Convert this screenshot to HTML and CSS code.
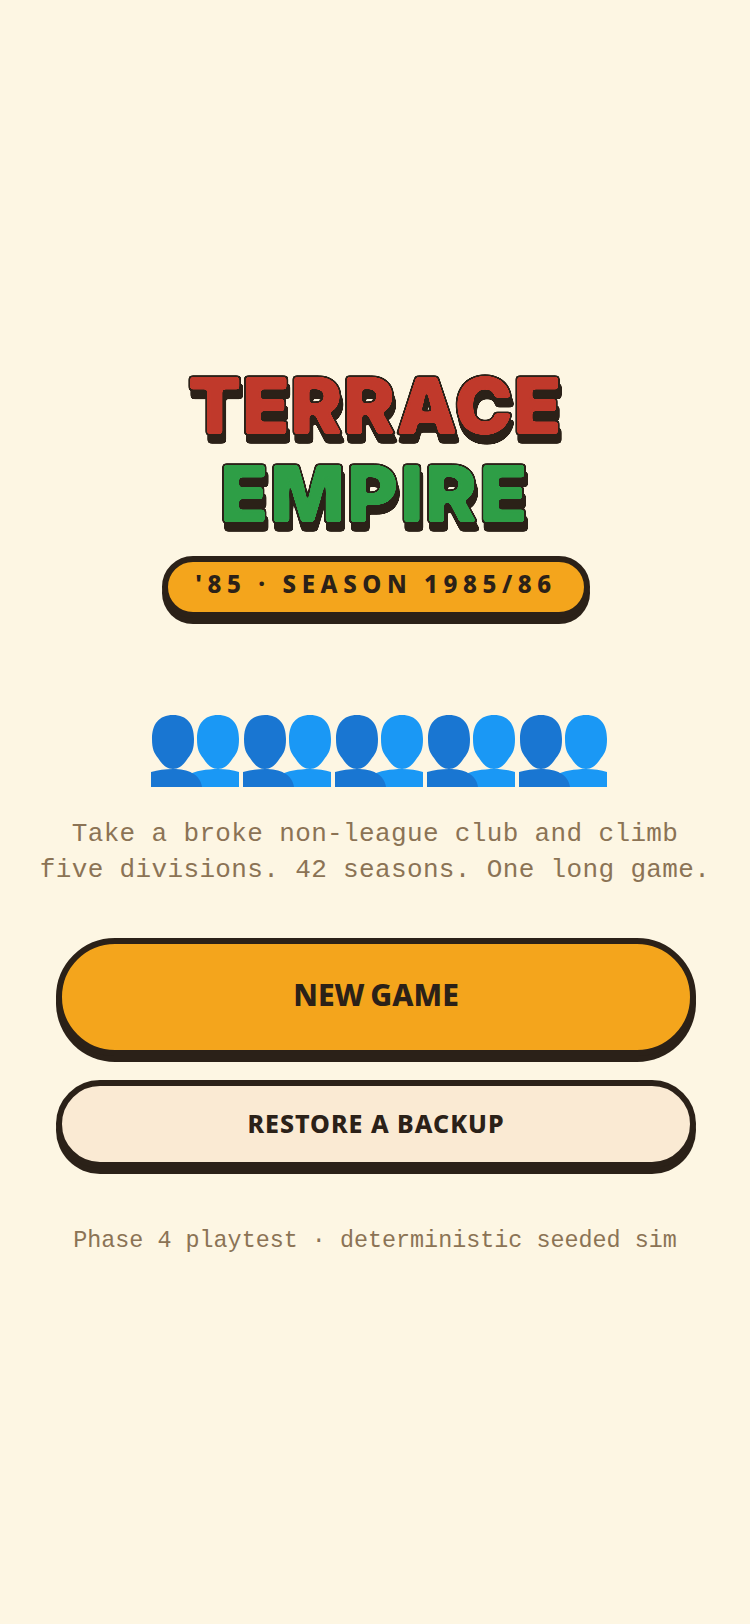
FILE: index.html
```html
<!DOCTYPE html>
<html lang="en">
<head>
<meta charset="utf-8">
<title>Terrace Empire</title>
<link rel="stylesheet" href="styles.css">
</head>
<body>
<svg class="defs" width="0" height="0" aria-hidden="true">
  <defs>
    <filter id="chunky" x="-10%" y="-15%" width="120%" height="140%" color-interpolation-filters="sRGB">
      <feGaussianBlur in="SourceGraphic" stdDeviation="1.6" result="soft"/>
      <feComponentTransfer in="soft" result="face">
        <feFuncA type="linear" slope="12" intercept="-5.5"/>
      </feComponentTransfer>
      <feGaussianBlur in="SourceAlpha" stdDeviation="1.7" result="wide"/>
      <feComponentTransfer in="wide" result="outlineMask">
        <feFuncA type="linear" slope="14" intercept="-1.2"/>
      </feComponentTransfer>
      <feFlood flood-color="#2b2118" result="ink"/>
      <feComposite in="ink" in2="outlineMask" operator="in" result="outline"/>
      <feOffset in="outline" dx="2" dy="8" result="drop"/>
      <feMerge>
        <feMergeNode in="drop"/>
        <feMergeNode in="outline"/>
        <feMergeNode in="face"/>
      </feMerge>
    </filter>
  </defs>
  <symbol id="pair" viewBox="0 0 88 72">
    <g class="light">
      <path d="M67 0C81 0 88 9 88 24C88 34 86 38 82 43C78 49 74 54 67 54C60 54 56 49 52 43C48 38 46 34 46 24C46 9 53 0 67 0Z"/>
      <path d="M36 60C44 56 56 54 67 54C75 54 82 55 88 57V72H36Z"/>
    </g>
    <g class="dark">
      <path d="M22 0C36 0 43 9 43 24C43 34 41 38 37 43C33 49 29 54 22 54C15 54 11 49 7 43C3 38 1 34 1 24C1 9 8 0 22 0Z"/>
      <path d="M0 57C7 55 14 54 22 54C37 54 49 59 51 72H0Z"/>
    </g>
  </symbol>
</svg>
<main class="screen">
  <h1 class="title">
    <span class="title-red">TERRACE</span>
    <span class="title-green">EMPIRE</span>
  </h1>
  <div class="badge"><span class="badge-text">'85 · SEASON 1985/86</span></div>
  <div class="crowd">
    <svg class="pair"><use href="#pair"/></svg>
    <svg class="pair"><use href="#pair"/></svg>
    <svg class="pair"><use href="#pair"/></svg>
    <svg class="pair"><use href="#pair"/></svg>
    <svg class="pair"><use href="#pair"/></svg>
  </div>
  <p class="tagline">Take a broke non-league club and climb<br>five divisions. 42 seasons. One long game.</p>
  <div class="actions">
    <button class="btn btn-primary">NEW GAME</button>
    <button class="btn btn-secondary">RESTORE A BACKUP</button>
  </div>
  <p class="footnote">Phase 4 playtest · deterministic seeded sim</p>
</main>
</body>
</html>
```
FILE: styles.css
```css
* { box-sizing: border-box; }
html, body { margin: 0; height: 100%; }
body { background: #fdf6e3; color: #2b2118; }
.defs { position: absolute; }
.screen {
  height: 1624px;
  display: flex;
  flex-direction: column;
  align-items: center;
  justify-content: center;
  padding: 0 56px 8px;
}
.title {
  margin: 4px 0 0;
  display: flex;
  flex-direction: column;
  align-items: center;
  font-family: "Inter", sans-serif;
  font-weight: 900;
  font-size: 78px;
  line-height: 88px;
}
.title-red { color: #c0392b; filter: url(#chunky); letter-spacing: 0.6px; }
.title-green { color: #2e9e46; filter: url(#chunky); letter-spacing: 2.2px; }
.badge {
  margin-top: 18px;
  height: 62px;
  width: 428px;
  display: flex;
  align-items: center;
  justify-content: center;
  background: #f4a51c;
  border: 6px solid #2b2118;
  border-radius: 31px;
  box-shadow: 0 6px 0 #2b2118;
  font-family: "Noto Sans", sans-serif;
  font-weight: 800;
  font-size: 24px;
  letter-spacing: 5.6px;
  transform: translateX(1px);
}
.badge-text { margin-bottom: 6px; }
.crowd {
  margin: 97px 0 0 8px;
  display: flex;
  gap: 4px;
}
.pair { width: 88px; height: 72px; display: block; }
.dark { fill: #1976d2; }
.light { fill: #1a98f5; }
.tagline {
  margin: 29px 0 0;
  font-family: "Liberation Mono", monospace;
  font-size: 26px;
  line-height: 36px;
  letter-spacing: 0.36px;
  text-align: center;
  color: #8b7355;
  white-space: nowrap;
}
.actions {
  margin: 50px 0 0 2px;
  width: 640px;
  display: flex;
  flex-direction: column;
  gap: 24px;
}
.btn {
  display: block;
  width: 100%;
  border: 6px solid #2b2118;
  box-shadow: 0 6px 0 #2b2118;
  color: #2b2118;
  font-family: "Noto Sans", sans-serif;
  font-weight: 800;
  padding: 0;
}
.btn-primary {
  height: 118px;
  border-radius: 60px;
  background: #f4a51c;
  font-size: 30px;
  word-spacing: -2px;
  padding-bottom: 4px;
}
.btn-secondary {
  height: 88px;
  border-radius: 44px;
  background: #faead3;
  font-size: 25px;
  letter-spacing: 1px;
  padding-bottom: 2px;
}
.footnote {
  margin: 55px 0 0;
  font-family: "Liberation Mono", monospace;
  font-size: 23.4px;
  line-height: 36px;
  color: #8b7355;
  white-space: nowrap;
}
```
